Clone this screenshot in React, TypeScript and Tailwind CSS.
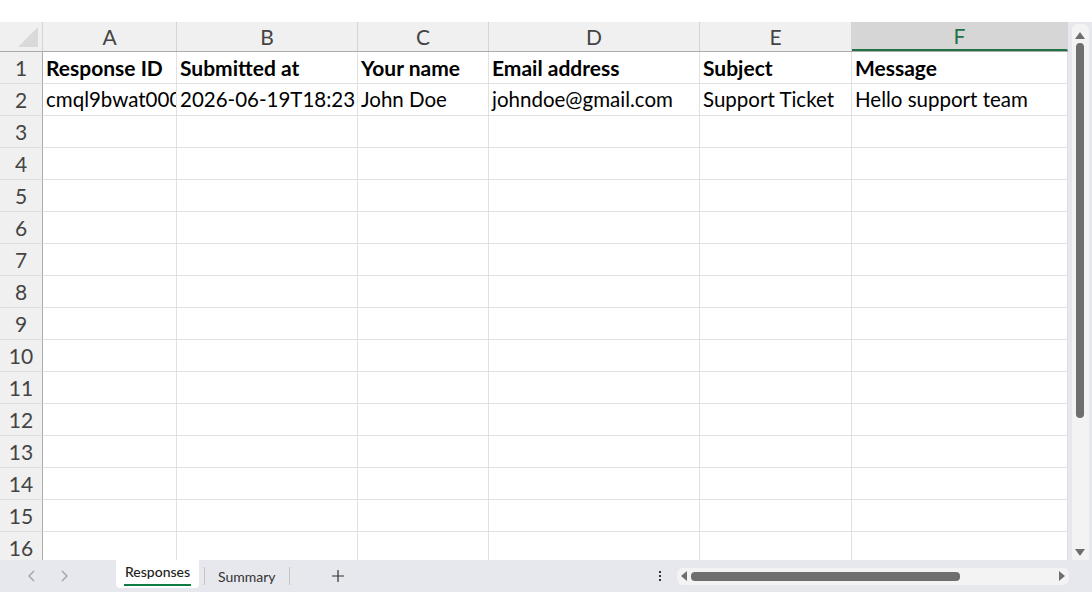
import React from "react";

const cols = [
  { key: "A", w: "w-[134px]" },
  { key: "B", w: "w-[181px]" },
  { key: "C", w: "w-[131px]" },
  { key: "D", w: "w-[211px]" },
  { key: "E", w: "w-[152px]" },
  { key: "F", w: "w-[216px]" },
];

const rows: string[][] = [
  ["Response ID", "Submitted at", "Your name", "Email address", "Subject", "Message"],
  ["cmql9bwat000", "2026-06-19T18:23", "John Doe", "johndoe@gmail.com", "Support Ticket", "Hello support team"],
];

const font = { fontFamily: "Lato, 'Open Sans', sans-serif" };

export default function App() {
  const rowNums = Array.from({ length: 16 }, (_, i) => i + 1);

  return (
    <div className="w-[1092px] h-[614px] bg-white overflow-hidden flex flex-col" style={font}>
      <div className="h-[22px] bg-white" />

      <div className="flex h-[538px]">
        {/* sheet */}
        <div className="w-[1068px] overflow-hidden">
          {/* column headers */}
          <div className="flex h-[30px] bg-[#f0f0f0] border-b border-[#ababab]">
            <div className="w-[43px] shrink-0 border-r border-[#d5d5d5] relative">
              <div className="absolute right-[4px] bottom-[4px] w-0 h-0 border-l-[20px] border-l-transparent border-b-[20px] border-b-[#d9d9d9]" />
            </div>
            {cols.map((c) => (
              <div
                key={c.key}
                className={`${c.w} shrink-0 flex items-center justify-center text-[21px] border-r border-[#d5d5d5] ${
                  c.key === "F"
                    ? "bg-[#d6d6d6] text-[#217346] border-b-2 border-b-[#217346]"
                    : "text-[#444]"
                }`}
              >
                {c.key}
              </div>
            ))}
          </div>

          {rowNums.map((n) => {
            const data = rows[n - 1];
            return (
              <div key={n} className="flex h-[32px]">
                <div className="w-[43px] shrink-0 bg-[#f0f0f0] border-r border-[#ababab] border-b border-b-[#dcdcdc] flex items-center justify-center text-[21px] text-[#444]">
                  {n}
                </div>
                {cols.map((c, i) => (
                  <div
                    key={c.key}
                    className={`${c.w} shrink-0 border-r border-b border-[#e1e1e1] flex items-center pl-[3px] overflow-hidden whitespace-nowrap text-black ${
                      n === 1 ? "font-bold text-[21px]" : "text-[20.5px]"
                    }`}
                  >
                    {data ? data[i] : ""}
                  </div>
                ))}
              </div>
            );
          })}
        </div>

        {/* vertical scrollbar */}
        <div className="w-[24px] bg-[#e6e8ee] flex justify-center pt-[2px]">
          <div className="w-[17px] h-[540px] bg-[#f3f3f3] rounded-[6px] flex flex-col items-center pt-[8px]">
            <div className="w-0 h-0 border-l-[5px] border-r-[5px] border-b-[7px] border-l-transparent border-r-transparent border-b-[#6e6e6e]" />
            <div className="mt-[4px] w-[8px] h-[375px] bg-[#6e6e6e] rounded-[4px]" />
            <div className="flex-1" />
            <div className="mb-[8px] w-0 h-0 border-l-[5px] border-r-[5px] border-t-[7px] border-l-transparent border-r-transparent border-t-[#6e6e6e]" />
          </div>
        </div>
      </div>

      {/* bottom bar */}
      <div className="h-[32px] bg-[#e6e8ee] flex items-center">
        <div className="w-[116px] flex items-center pl-[26px] gap-[20px]">
          <svg width="12" height="14" viewBox="0 0 12 14" fill="none" stroke="#a0a0a0" strokeWidth="1.3">
            <path d="M8 2 L3 7 L8 12" />
          </svg>
          <svg width="12" height="14" viewBox="0 0 12 14" fill="none" stroke="#a0a0a0" strokeWidth="1.3">
            <path d="M4 2 L9 7 L4 12" />
          </svg>
        </div>
        <div className="self-start h-[28px] w-[83px] bg-white rounded-b-[4px] flex flex-col items-center pt-[3px]">
          <span className="text-[14px] text-[#222] font-medium leading-[18px]">Responses</span>
          <div className="mt-[3px] w-[67px] h-[2px] bg-[#107c41]" />
        </div>
        <div className="ml-[5px] w-px h-[18px] bg-[#c4c4c4]" />
        <span className="ml-[13px] text-[14px] text-[#333]">Summary</span>
        <div className="ml-[13px] w-px h-[18px] bg-[#c4c4c4]" />
        <svg className="ml-[41px]" width="14" height="14" viewBox="0 0 14 14" stroke="#333" strokeWidth="1.2">
          <path d="M7 1 V13 M1 7 H13" />
        </svg>
        <div className="ml-[314px] flex flex-col gap-[2px]">
          <div className="w-[2px] h-[2px] bg-[#333]" />
          <div className="w-[2px] h-[2px] bg-[#333]" />
          <div className="w-[2px] h-[2px] bg-[#333]" />
        </div>
        <div className="ml-[16px] w-[392px] h-[17px] bg-[#f3f3f3] rounded-[6px] flex items-center px-[4px]">
          <div className="w-0 h-0 border-t-[5px] border-b-[5px] border-r-[6px] border-t-transparent border-b-transparent border-r-[#6e6e6e]" />
          <div className="ml-[4px] w-[269px] h-[9px] bg-[#6e6e6e] rounded-[4px]" />
          <div className="flex-1" />
          <div className="w-0 h-0 border-t-[5px] border-b-[5px] border-l-[6px] border-t-transparent border-b-transparent border-l-[#6e6e6e]" />
        </div>
      </div>

      <div className="flex-1 bg-white" />
    </div>
  );
}
